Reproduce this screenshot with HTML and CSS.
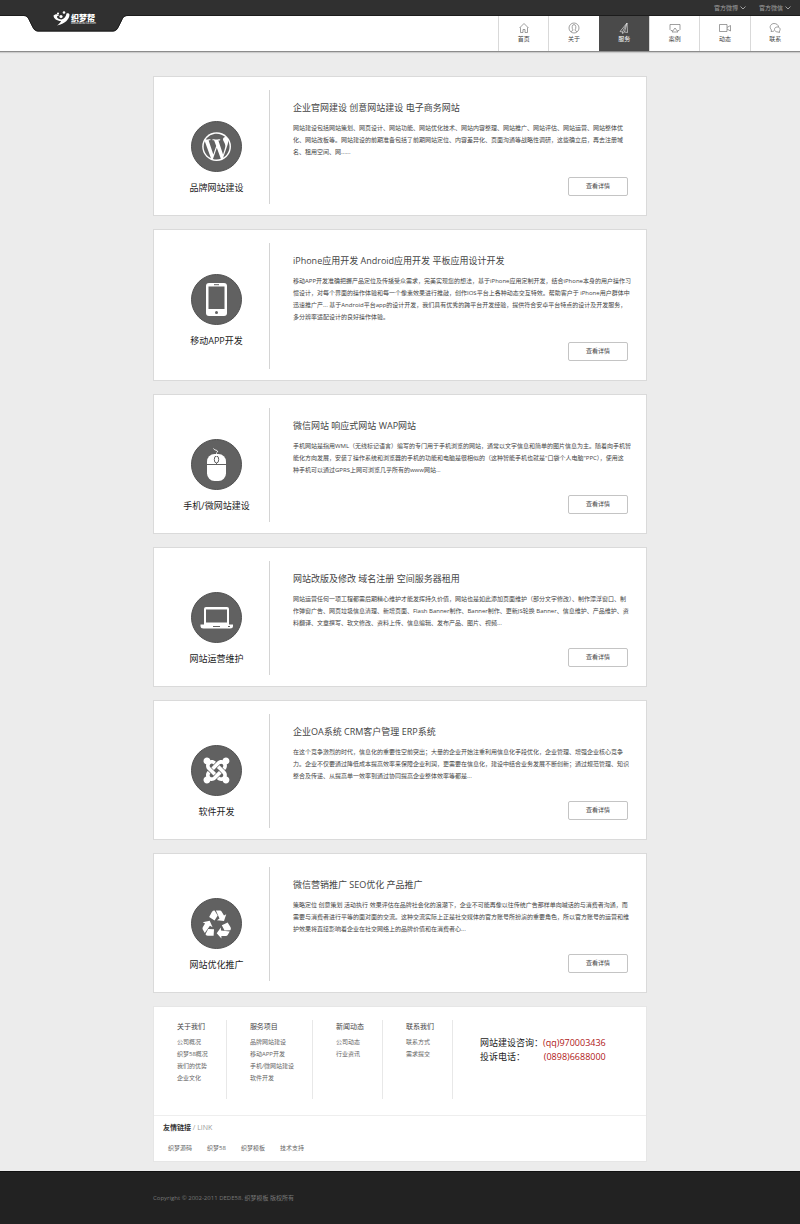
FILE: index.html
```html
<!doctype html>
<html lang="zh-CN">
    <head>
        <meta charset="UTF-8" />
        <meta name="viewport" content="width=device-width, initial-scale=1.0" />
        <title>服务</title>
        <link rel="stylesheet" href="styles.css">
    </head>
    <body>
        <header class="header">
            <div class="topbar">
                <button class="topbar-btn" type="button">官方微博
                    <svg class="chevron" viewBox="0 0 6 4"><path d="M.5.5 3 3 5.5.5" /></svg>
                </button>
                <button class="topbar-btn" type="button">官方微信
                    <svg class="chevron" viewBox="0 0 6 4"><path d="M.5.5 3 3 5.5.5" /></svg>
                </button>
            </div>

            <a class="logo" href="#">
                <svg class="logo-tab" viewBox="0 0 104 18">
                    <path class="tab-fill" d="M0 0v1c3 0 4 2 5 4l4 8c1 2 3 3.500 5 3.500h75c2 0 4-1.500 5-3.500l4-8c1-2 2-4 6-4V0z" />
                    <path class="tab-edge" d="M0 .5c3 0 4 2 5 4l4 8c1 2 3 3.500 5 3.500h75c2 0 4-1.500 5-3.500l4-8c1-2 2-4 6-4" />
                </svg>
                <span class="logo-inner">
                    <svg class="logo-mark" viewBox="0 0 17 15">
                        <path d="M.5 4.500C3 2.500 5 3 6.500 4.500c-1.500 0-2.500.5-2.500 1.500 0 1.500 2.500 2.500 4.500 2.500C11 8 13 5.500 13.500 2.500c1.500-.5 2.500 0 3 1C16.500 8 12 13 4 14.500c2-1.500 3.500-3 4-4.500C4 10 .5 7.500.5 4.500z" />
                        <circle cx="8" cy="5.500" r="1.600" />
                        <circle cx="5" cy="2.500" r="1.100" />
                        <circle cx="11" cy="1.500" r="1.300" />
                    </svg>
                    <span class="logo-text">
                        <strong>织梦帮</strong>
                        <small>www.dede58.com</small>
                    </span>
                </span>
            </a>

            <nav class="nav">
                <a href="#">
                    <svg viewBox="0 0 12 12"><path d="M1.500 6 6 1.500 10.500 6M2.500 5.500v5h2.500V7.500h2v3h2.500v-5" /></svg>
                    首页
                </a>
                <a href="#">
                    <svg viewBox="0 0 12 12"><circle cx="6" cy="6" r="5" /><path d="M3 10c.5-1.500 2-1 2-2C3.500 6 4 2.500 6 2.500S8.500 6 7 8c0 1 1.500.5 2 2" /></svg>
                    关于
                </a>
                <a class="active" href="#">
                    <svg viewBox="0 0 12 12"><path d="M9 1 2 9.500l2.500.5L9 1l.5 9.500-3-.5L9 1M4.500 10v1.500l2-1.500" /></svg>
                    服务
                </a>
                <a href="#">
                    <svg viewBox="0 0 12 12"><path d="M3.500 8.500H2l-1-1v-5h10v5l-1 1H8.500M6 6l3 4H3z" /></svg>
                    案例
                </a>
                <a href="#">
                    <svg viewBox="0 0 12 12"><path d="M.5 2.500h7.500v7H.5zM8 5.500l3.500-2v5.500L8 7" /></svg>
                    动态
                </a>
                <a href="#">
                    <svg viewBox="0 0 12 12"><path d="M5 9C4 9.500 3 9.500 2 9.500L2.500 8C-.5 5 2 1.500 5 1.500c2.500 0 4.500 1.500 4.500 3.500" /><path d="M8.500 5c-2 0-3 1-3 2.500S7 10 9 10l1.500.5V9c1.500-2 0-4-2-4z" /></svg>
                    联系
                </a>
            </nav>
        </header>

        <main class="container">
            <article class="card">
                <div class="card-side">
                    <svg class="card-icon" viewBox="0 0 51 51">
                        <circle class="disc" cx="25.500" cy="25.500" r="25" />
                        <g transform="translate(11.200 11.200) scale(1.200)">
                            <circle class="white" cx="12" cy="12" r="12" />
                            <path class="dark" d="M21.469 6.825c.84 1.537 1.318 3.300 1.318 5.175 0 3.979-2.156 7.456-5.363 9.325l3.295-9.527c.615-1.540.820-2.771.820-3.864 0-.405-.026-.780-.070-1.110m-7.981.105c.647-.030 1.232-.105 1.232-.105.582-.075.514-.930-.067-.899 0 0-1.755.135-2.880.135-1.064 0-2.850-.150-2.850-.150-.585-.030-.661.855-.075.885 0 0 .540.061 1.125.090l1.680 4.605-2.370 7.080L5.354 6.900c.649-.030 1.234-.100 1.234-.100.585-.075.516-.930-.065-.896 0 0-1.746.138-2.874.138-.200 0-.438-.008-.690-.015C4.911 3.150 8.235 1.215 12 1.215c2.809 0 5.365 1.072 7.286 2.833-.046-.003-.091-.009-.141-.009-1.060 0-1.812.923-1.812 1.914 0 .890.513 1.643 1.060 2.531.411.720.890 1.643.890 2.977 0 .915-.354 1.994-.821 3.479l-1.075 3.585-3.900-11.610zM12 22.784c-1.059 0-2.081-.153-3.048-.437l3.237-9.406 3.315 9.087c.024.053.050.101.078.149-1.120.393-2.325.609-3.582.609M1.211 12c0-1.564.336-3.050.935-4.390L7.290 21.709C3.694 19.960 1.212 16.271 1.211 12" />
                        </g>
                    </svg>
                    <h3>品牌网站建设</h3>
                </div>
                <div class="card-main">
                    <h2>企业官网建设 创意网站建设 电子商务网站</h2>
                    <p>网站建设包括网站策划、网页设计、网站功能、网站优化技术、网站内容整理、网站推广、网站评估、网站运营、网站整体优<br>化、网站改板等。网站建设的前期准备包括了前期网站定位、内容差异化、页面沟通等战略性调研，这些确立后，再去注册域<br>名、租用空间、网......</p>
                    <a class="btn" href="#">查看详情</a>
                </div>
            </article>

            <article class="card">
                <div class="card-side">
                    <svg class="card-icon" viewBox="0 0 51 51">
                        <circle class="disc" cx="25.500" cy="25.500" r="25" />
                        <rect class="white" x="15" y="9" width="21" height="33" rx="3" />
                        <rect class="dark" x="17.500" y="12.500" width="16" height="22.500" />
                        <rect class="dark" x="23" y="10.200" width="5" height="1" />
                        <circle class="dark" cx="25.500" cy="38.500" r="1.500" />
                    </svg>
                    <h3>移动APP开发</h3>
                </div>
                <div class="card-main">
                    <h2>iPhone应用开发 Android应用开发 平板应用设计开发</h2>
                    <p>移动APP开发准确把握产品定位及传播受众需求，完美实现您的想法，基于iPhone应用定制开发，结合iPhone本身的用户操作习<br>惯设计，对每个界面的操作体验和每一个像素效果进行推敲，创作IOS平台上各种动态交互特效。帮助客户于 iPhone用户群体中<br>迅速推广产... 基于Android平台app的设计开发，我们具有优秀的跨平台开发经验，提供符合安卓平台特点的设计及开发服务，<br>多分辨率适配设计的良好操作体验。</p>
                    <a class="btn" href="#">查看详情</a>
                </div>
            </article>

            <article class="card">
                <div class="card-side">
                    <svg class="card-icon" viewBox="0 0 51 51">
                        <circle class="disc" cx="25.500" cy="25.500" r="25" />
                        <rect class="white" x="16" y="15" width="19" height="27" rx="7.500" />
                        <path class="dark-line" d="M16 25.500h19M25.500 15v10" />
                        <ellipse class="white dark-line" cx="25.500" cy="20.500" rx="2.200" ry="3.500" />
                        <path class="white-line" d="M25.500 17v-2.500c0-1.500 1.500-1 1-2.500-.5-1-3-.5-4-2.500" />
                    </svg>
                    <h3>手机/微网站建设</h3>
                </div>
                <div class="card-main">
                    <h2>微信网站 响应式网站 WAP网站</h2>
                    <p>手机网站是指用WML（无线标记语言）编写的专门用于手机浏览的网站，通常以文字信息和简单的图片信息为主。随着向手机智<br>能化方向发展，安装了操作系统和浏览器的手机的功能和电脑是很相似的（这种智能手机也就是"口袋个人电脑"PPC），使用这<br>种手机可以通过GPRS上网可浏览几乎所有的www网站...</p>
                    <a class="btn" href="#">查看详情</a>
                </div>
            </article>

            <article class="card">
                <div class="card-side">
                    <svg class="card-icon" viewBox="0 0 51 51">
                        <circle class="disc" cx="25.500" cy="25.500" r="25" />
                        <path class="white" d="M15 15h21q2 0 2 2v15.500h4V34q0 2.500-3 2.500H12.500q-3 0-3-2.500v-1.500H13V17q0-2 2-2z" />
                        <rect class="dark" x="15" y="17.500" width="21" height="13" />
                        <path class="dark-line" d="M22 34.500h7M37 34.500h2" />
                    </svg>
                    <h3>网站运营维护</h3>
                </div>
                <div class="card-main">
                    <h2>网站改版及修改 域名注册 空间服务器租用</h2>
                    <p>网站运营任何一项工程都需后期精心维护才能发挥持久价值，网站也是如此添加页面维护（部分文字修改）、制作漂浮窗口、制<br>作弹窗广告、网页垃圾信息清理、新增页面、Flash Banner制作、Banner制作、更新JS轮换 Banner、信息维护、产品维护、资<br>料翻译、文章撰写、软文修改、资料上传、信息编辑、发布产品、图片、视频...</p>
                    <a class="btn" href="#">查看详情</a>
                </div>
            </article>

            <article class="card">
                <div class="card-side">
                    <svg class="card-icon" viewBox="0 0 51 51">
                        <circle class="disc" cx="25.500" cy="25.500" r="25" />
                        <g class="white" transform="translate(12.500 12.500) scale(1.080)">
                            <path id="knot" d="M16.719 14.759 14.220 17.260l-2.370 2.370-.462.466c-1.368 1.365-3.297 1.830-5.047 1.397-.327 1.424-1.604 2.490-3.130 2.490C1.438 23.983 0 22.547 0 20.772c0-1.518 1.055-2.789 2.469-3.123-.446-1.760.016-3.705 1.396-5.080l.179-.180 2.370 2.370-.184.181c-.769.779-.769 2.024 0 2.789.771.780 2.022.780 2.787 0l.465-.465 2.367-2.371 2.502-2.506z" />
                            <use href="#knot" transform="rotate(90 12 12)" />
                            <use href="#knot" transform="rotate(180 12 12)" />
                            <use href="#knot" transform="rotate(270 12 12)" />
                        </g>
                    </svg>
                    <h3>软件开发</h3>
                </div>
                <div class="card-main">
                    <h2>企业OA系统 CRM客户管理 ERP系统</h2>
                    <p>在这个竞争激烈的时代，信息化的重要性空前突出；大量的企业开始注重利用信息化手段优化，企业管理、增强企业核心竞争<br>力。企业不仅要通过降低成本提高效率来保障企业利润，更需要在信息化，建设中结合业务发展不断创新；通过规范管理、知识<br>整合及传递、从提高单一效率到通过协同提高企业整体效率等都是...</p>
                    <a class="btn" href="#">查看详情</a>
                </div>
            </article>

            <article class="card">
                <div class="card-side">
                    <svg class="card-icon" viewBox="0 0 51 51">
                        <circle class="disc" cx="25.500" cy="25.500" r="25" />
                        <g class="white" transform="translate(25.800 27) scale(.9)">
                            <path id="arrow" d="M-8.500-9-5.500-14.500q1-1.500 3-1.500L1-10.500-2.500-5zM-1-16h4.500q1.200 0 2 1.200L8-10.500l2.500-1.500L8-4.500.2-5.300l2.800-1.800z" />
                            <use href="#arrow" transform="rotate(120)" />
                            <use href="#arrow" transform="rotate(240)" />
                        </g>
                    </svg>
                    <h3>网站优化推广</h3>
                </div>
                <div class="card-main">
                    <h2>微信营销推广 SEO优化 产品推广</h2>
                    <p>策略定位 创意策划 活动执行 效果评估在品牌社会化的浪潮下，企业不可能再像以往传统广告那样单向喊话的与消费者沟通，而<br>需要与消费者进行平等的面对面的交流。这种交流实际上正是社交媒体的官方账号所扮演的重要角色，所以官方账号的运营和维<br>护效果将直接影响着企业在社交网络上的品牌价值和在消费者心...</p>
                    <a class="btn" href="#">查看详情</a>
                </div>
            </article>

            <section class="site-info">
                <div class="info-cols">
                    <div class="info-col">
                        <h4>关于我们</h4>
                        <a href="#">公司概况</a>
                        <a href="#">织梦58概况</a>
                        <a href="#">我们的优势</a>
                        <a href="#">企业文化</a>
                    </div>
                    <div class="info-col">
                        <h4>服务项目</h4>
                        <a href="#">品牌网站建设</a>
                        <a href="#">移动APP开发</a>
                        <a href="#">手机/微网站建设</a>
                        <a href="#">软件开发</a>
                    </div>
                    <div class="info-col">
                        <h4>新闻动态</h4>
                        <a href="#">公司动态</a>
                        <a href="#">行业资讯</a>
                    </div>
                    <div class="info-col">
                        <h4>联系我们</h4>
                        <a href="#">联系方式</a>
                        <a href="#">需求提交</a>
                    </div>
                    <div class="contact">
                        <div>网站建设咨询：<span>(qq)970003436</span></div>
                        <div>投诉电话：<span>(0898)6688000</span></div>
                    </div>
                </div>
                <div class="links">
                    <h4>友情链接 <span>/ LINK</span></h4>
                    <div class="links-list">
                        <a href="#">织梦源码</a>
                        <a href="#">织梦58</a>
                        <a href="#">织梦模板</a>
                        <a href="#">技术支持</a>
                    </div>
                </div>
            </section>
        </main>

        <footer class="footer">
            <p>Copyright © 2002-2011 DEDE58. 织梦模板 版权所有</p>
        </footer>
    </body>
</html>
```
FILE: styles.css
```css
* {
    box-sizing: border-box;
}

body {
    margin: 0;
    min-height: 100vh;
    display: flex;
    flex-direction: column;
    background: #ececec;
    color: #444;
    font-family: "Open Sans", "Noto Sans CJK SC", sans-serif;
    font-size: 6px;
    line-height: 12px;
}

h2,
h3,
h4,
p {
    margin: 0;
    font-weight: 400;
}

a {
    color: inherit;
    text-decoration: none;
}

.header {
    position: relative;
    background: #fff;
    border-bottom: 1px solid #8c8c8c;
    box-shadow: 0 1px 1px #ccc;
}

.topbar {
    height: 16px;
    padding: 0 9px;
    display: flex;
    justify-content: flex-end;
    align-items: center;
    gap: 13px;
    background: #303030;
    border-bottom: 1px solid #1c1c1c;
}

.topbar-btn {
    display: flex;
    align-items: center;
    gap: 2px;
    padding: 0;
    border: none;
    background: none;
    color: #a0a0a0;
    font: inherit;
    cursor: pointer;
}

.chevron {
    width: 6px;
    height: 4px;
    fill: none;
    stroke: #a0a0a0;
}

/* the tab hangs over the white bar */
.logo {
    position: absolute;
    top: 15px;
    left: 24px;
    width: 104px;
    height: 18px;
}

.logo-tab {
    display: block;
    width: 104px;
    height: 18px;
}

.tab-fill {
    fill: #303030;
}

.tab-edge {
    fill: none;
    stroke: #1c1c1c;
}

.logo-inner {
    position: absolute;
    top: -4px;
    left: 29px;
    display: flex;
    gap: 1px;
    color: #fff;
}

.logo-mark {
    width: 17px;
    height: 15px;
    fill: #fff;
}

.logo-text {
    padding-top: 2px;
}

.logo-text strong {
    display: block;
    font-size: 8px;
    font-weight: 900;
    line-height: 9px;
}

.logo-text small {
    display: block;
    font-size: 3px;
    line-height: 3px;
}

.nav {
    width: 302px;
    height: 35px;
    margin-left: auto;
    display: grid;
    grid-template-columns: repeat(6, 1fr);
}

.nav a {
    display: flex;
    flex-direction: column;
    align-items: center;
    padding-top: 6px;
    border-left: 1px solid #d9d9d9;
    line-height: 10px;
}

.nav svg {
    width: 12px;
    height: 12px;
    fill: none;
    stroke: #777;
    stroke-width: .7;
}

.nav .active {
    background: #4a4a4a;
    border-color: #4a4a4a;
    color: #fff;
}

.nav .active svg {
    stroke: #ddd;
}

.container {
    width: 494px;
    max-width: 100%;
    margin: 24px auto 9px;
    display: flex;
    flex-direction: column;
    gap: 13px;
}

.card {
    display: flex;
    padding: 13px 18px 11px 10px;
    background: #fff;
    border: 1px solid #dadada;
}

.card-side {
    flex: 0 0 106px;
    padding-top: 31px;
    border-right: 1px solid #d4d4d4;
    text-align: center;
}

.card-icon {
    display: block;
    width: 51px;
    height: 51px;
    margin: 0 auto 9px;
}

.disc {
    fill: #616161;
    stroke: #505050;
}

.white {
    fill: #fff;
}

.dark {
    fill: #616161;
}

.dark-line {
    stroke: #616161;
}

.white-line {
    fill: none;
    stroke: #fff;
}

.card-side h3 {
    color: #222;
    font-size: 9px;
    line-height: 14px;
}

.card-main {
    flex: 1;
    min-width: 0;
    display: flex;
    flex-direction: column;
    padding: 11px 0 8px 23px;
    white-space: nowrap;
}

.card-main h2 {
    margin-bottom: 7px;
    font-size: 9px;
    line-height: 14px;
}

.btn {
    width: 60px;
    margin-top: 19px;
    margin-left: auto;
    border: 1px solid #c4c4c4;
    border-radius: 2px;
    line-height: 17px;
    text-align: center;
}

.site-info {
    background: #fff;
    border: 1px solid #e6e6e6;
    color: #666;
}

.info-cols {
    display: flex;
    padding: 13px 0 16px;
    border-bottom: 1px solid #eee;
}

.info-col {
    display: flex;
    flex-direction: column;
    min-height: 79px;
    padding: 0 18px 0 23px;
    border-right: 1px solid #e8e8e8;
}

.info-col h4 {
    margin-bottom: 3px;
    color: #444;
    font-size: 7px;
    line-height: 13px;
}

.contact {
    padding: 16px 0 0 27px;
    color: #222;
    font-size: 9px;
    line-height: 14px;
}

.contact div {
    display: flex;
    justify-content: space-between;
}

.contact span {
    color: #b01818;
}

.links {
    padding: 6px 9px 7px;
}

.links h4 {
    color: #333;
    font-size: 7px;
    font-weight: 700;
}

.links h4 span {
    color: #999;
    font-weight: 400;
}

.links-list {
    display: flex;
    gap: 15px;
    padding: 8px 5px 0;
}

.footer {
    flex: 1;
    padding-top: 20px;
    background: #222;
    border-top: 1px solid #111;
    color: #777;
}

.footer p {
    width: 494px;
    max-width: 100%;
    margin: 0 auto;
}
```
